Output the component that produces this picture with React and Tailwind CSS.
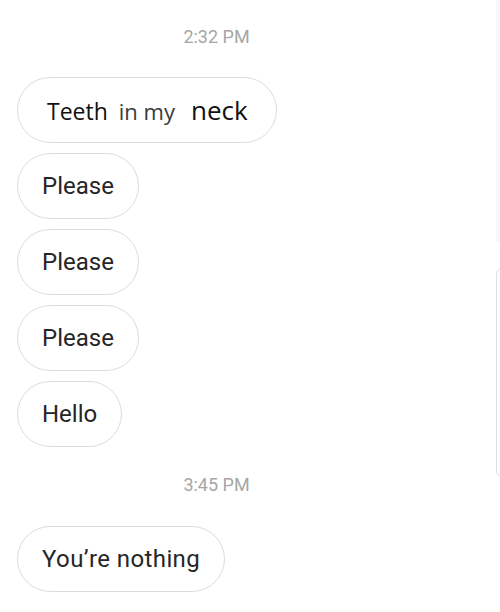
export default function App() {
  const bubble =
    "h-[66px] rounded-full border-[1.5px] border-[#dcdcdc] bg-white flex items-center px-[24px] self-start";
  const txt = "text-[24px] text-[#262626] leading-none";
  const ts =
    "h-[20px] flex items-center justify-center pr-[84px] text-[18px] leading-[20px] text-[#a6a6a6]";
  return (
    <div
      className="relative w-[500px] h-[612px] overflow-hidden bg-white"
      style={{ fontFamily: "Roboto, 'Liberation Sans', sans-serif" }}
    >
      <div className="flex flex-col pl-[17px]">
        <div className={`${ts} mt-[27px]`}>2:32 PM</div>
        <div className="flex flex-col gap-[10px] mt-[30px]">
          <div className={`${bubble} pl-[29px] pr-[28px]`}>
            <span
              className="flex items-baseline leading-none"
              style={{ fontFamily: "'Open Sans', sans-serif" }}
            >
              <span className="text-[23px] text-[#111]">Teeth</span>
              <span className="text-[22px] text-[#3a3a3a] ml-[11px]">in my</span>
              <span className="text-[26px] text-[#111] ml-[16px]">neck</span>
            </span>
          </div>
          <div className={bubble}>
            <span className={txt}>Please</span>
          </div>
          <div className={bubble}>
            <span className={txt}>Please</span>
          </div>
          <div className={bubble}>
            <span className={txt}>Please</span>
          </div>
          <div className={bubble}>
            <span className={txt}>Hello</span>
          </div>
        </div>
        <div className={`${ts} mt-[28px]`}>3:45 PM</div>
        <div className={`${bubble} mt-[31px]`}>
          <span className={`${txt} tracking-[0.4px]`}>You’re nothing</span>
        </div>
      </div>
      <div className="absolute right-0 top-0 w-[4px] h-[242px] bg-[#f8f8f8]" />
      <div className="absolute right-[-10px] top-[268px] w-[14px] h-[209px] rounded-[6px] border-[1.5px] border-[#e0e0e0]" />
    </div>
  );
}
